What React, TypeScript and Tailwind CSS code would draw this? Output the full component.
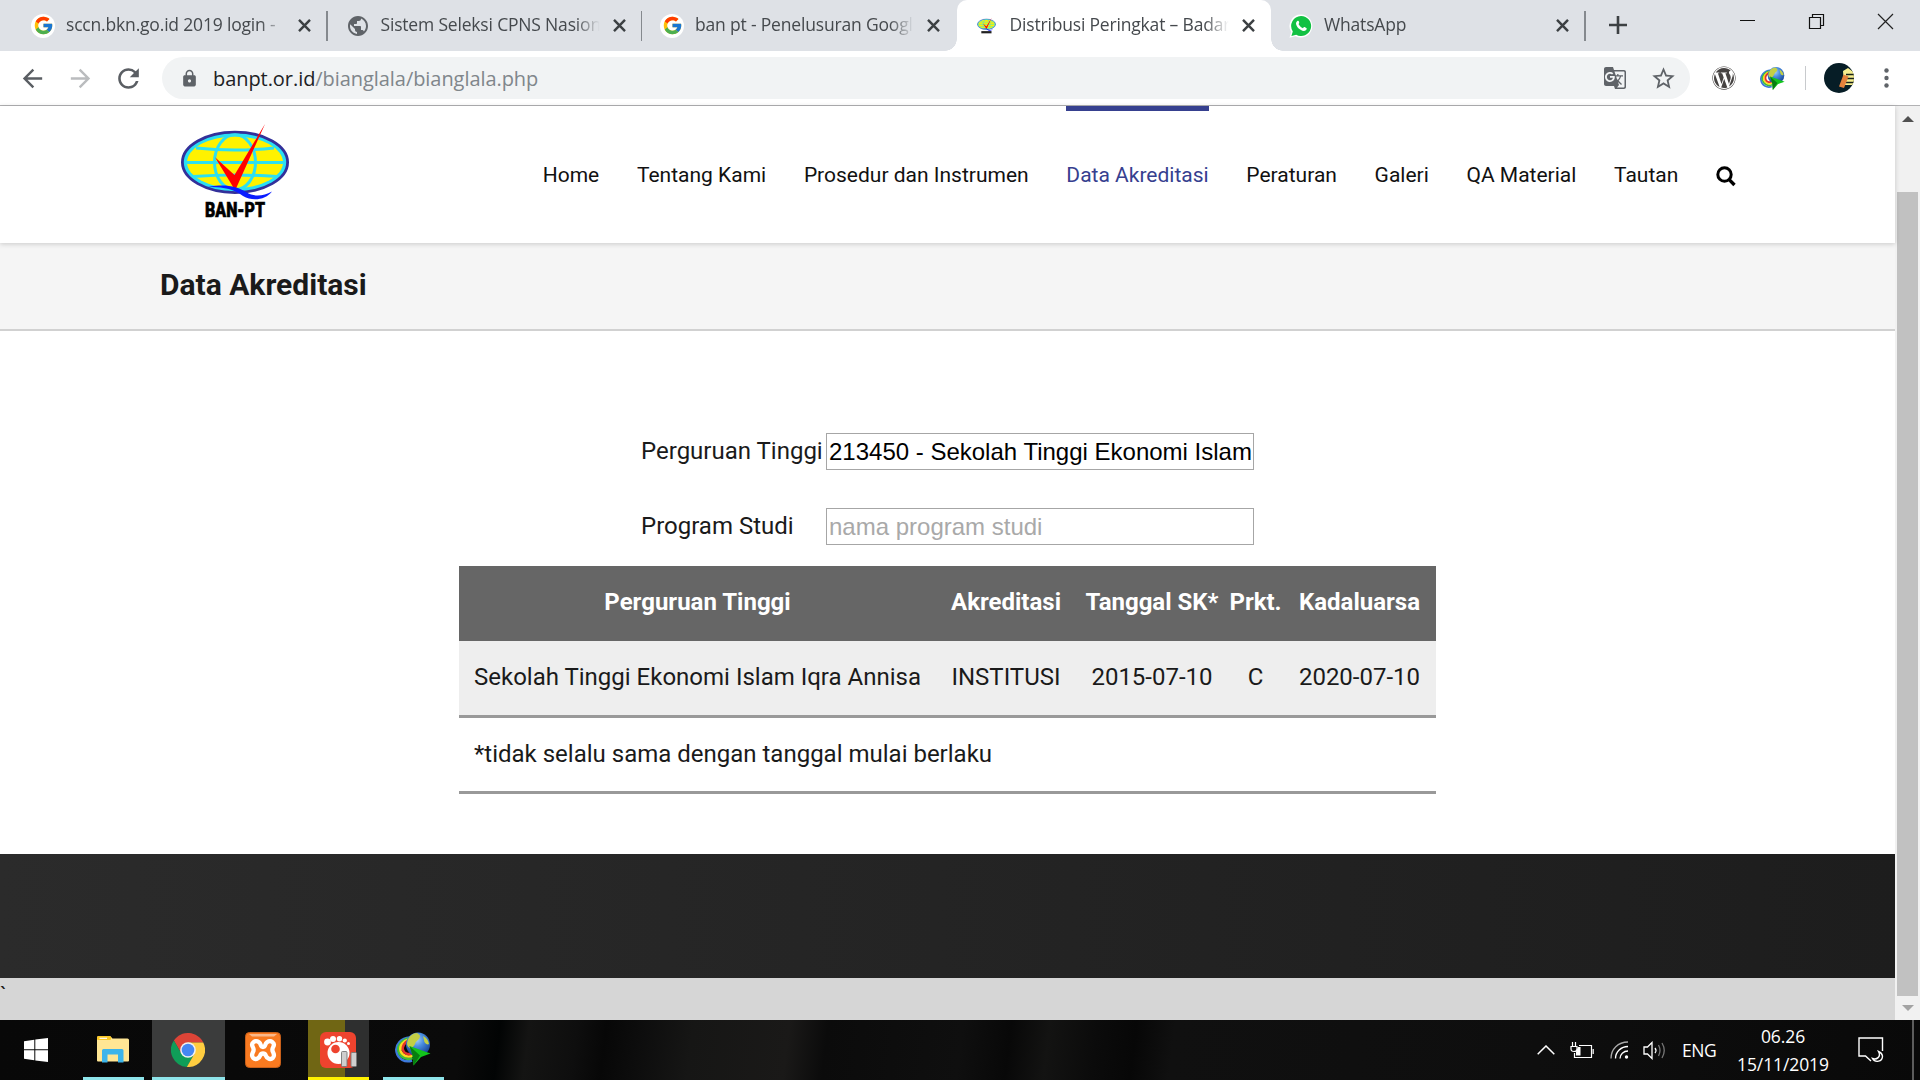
import type { ReactNode } from 'react';
import { FcGoogle } from 'react-icons/fc';
import { FaWordpress } from 'react-icons/fa';
import {
  MdArrowBack,
  MdArrowForward,
  MdGTranslate,
  MdLock,
  MdPublic,
  MdRefresh,
  MdStarBorder,
} from 'react-icons/md';

function CloseX() {
  return (
    <svg width="13" height="13" viewBox="0 0 13 13" className="shrink-0">
      <path d="M1 0.800 12 12.200M12 0.800 1 12.200" stroke="#3c4043" strokeWidth="2.4" />
    </svg>
  );
}

function GlobeMark() {
  return (
    <>
      <ellipse cx="55" cy="40.3" rx="52.6" ry="30.2" fill="#29dff5" stroke="#33309a" strokeWidth="2.8" />
      <ellipse cx="55" cy="40.3" rx="48" ry="25.8" fill="#fff200" />
      <g fill="none" stroke="#2ee0f0" strokeWidth="3">
        <ellipse cx="55" cy="40.3" rx="20.5" ry="27.5" />
        <path d="M5 40.5H105M16 26Q35 28 55 28T94 26M13 54.5Q35 53 55 53T97 54.5" />
      </g>
      <path d="M35 35.3 54.5 53 85 2 56 66.5 54 66.5Z" fill="#ff0000" />
      <path d="M28 65C45 62 56 64 66 70C75 75.500 83 74 92 69.500C86 77.500 73 80 63 74C54 67 42 64.500 28 65Z" fill="#0a1cff" />
    </>
  );
}

function BanPtLogo() {
  return (
    <svg width="110" height="98" viewBox="0 0 110 98">
      <GlobeMark />
      <text
        x="25"
        y="94.5"
        textLength="60"
        lengthAdjust="spacingAndGlyphs"
        fontFamily="Roboto, sans-serif"
        fontWeight="900"
        fontSize="19.5"
        fill="#000"
        stroke="#000"
        strokeWidth="0.6"
      >
        BAN-PT
      </text>
    </svg>
  );
}

function BanPtFavicon() {
  return (
    <svg width="19" height="18" viewBox="0 0 110 100">
      <GlobeMark />
      <path d="M25 86H84" stroke="#222" strokeWidth="13" />
    </svg>
  );
}

function WhatsAppIcon() {
  return (
    <svg width="24" height="24" viewBox="0 0 24 24">
      <path d="M12 0.500A11.500 11.500 0 1 1 6.500 22.200L0.500 23.800 2.200 18A11.500 11.500 0 0 1 12 0.500Z" fill="#fff" />
      <path d="M12 2A10 10 0 1 1 7.200 20.700L2.400 21.900 3.800 17.400A10 10 0 0 1 12 2Z" fill="#12c143" />
      <path
        d="M8.700 6.800C9.400 6.400 9.700 7 10 7.800C10.400 8.900 10.300 9.100 9.500 10C10.500 12 11.900 13.300 14 14.200C15 13 15.200 12.900 16 13.300L17.700 14.200C17.800 16 16.300 17 14.800 17C11 16.500 7.600 13.200 7 9.800C7 8.500 7.700 7.300 8.700 6.800Z"
        fill="#fff"
      />
    </svg>
  );
}

function IdmIcon({ size }: { size: number }) {
  return (
    <svg width={size} height={size} viewBox="0 0 36 34">
      <defs>
        <radialGradient id="idmGlobe" cx="0.45" cy="0.3" r="0.7">
          <stop offset="0" stopColor="#a9d0f7" />
          <stop offset="0.4" stopColor="#4a8ee0" />
          <stop offset="1" stopColor="#143f94" />
        </radialGradient>
      </defs>
      <g fill="none" strokeWidth="2.600">
        <path d="M15 5.500C6 6 0 13 1.600 20C3 27 10 31 17 28.500" stroke="#3d79dd" />
        <path d="M14 6.500C7 7.500 2.500 13.500 3.500 19C5 25 11 28.500 17.500 26" stroke="#3fbe3a" />
        <path d="M14 7.500C8 9 4.500 14 5.500 18.500C7 23.500 12 26 18 23.500" stroke="#ffd91f" />
        <path d="M14 8.500C9.500 10 7 14.500 8 18C9 21.500 13 23.500 18 21" stroke="#e5322d" />
      </g>
      <circle cx="23" cy="12.500" r="12" fill="url(#idmGlobe)" />
      <path d="M12.500 9C14 4 18 1 22 1C24 2.500 26 3 24.500 6C23.500 8.500 21 8.500 20 12C19 15 16 16.500 14 15.500C12 14 11.500 12 12.500 9ZM28 4C31 5.500 33.500 8 34 12C32 13.500 29 11 29 8Z" fill="#c3cf45" />
      <path d="M14.500 14 35.500 21.500 26 25 18.500 33.500 17.500 23Z" fill="#12c51c" />
      <path d="M14.500 14 25 23.500 18.500 33.500 17.500 23Z" fill="#087d10" />
    </svg>
  );
}

type TabProps = { icon: ReactNode; title: string; active?: boolean; separator?: boolean };

function Tab({ icon, title, active, separator }: TabProps) {
  return (
    <div
      className={
        'relative flex h-full w-[314.5px] shrink-0 items-center pl-[18px] ' +
        (active ? 'rounded-t-[10px] bg-white' : '')
      }
    >
      {active && (
        <>
          <span className="absolute bottom-0 -left-3 size-3 bg-[radial-gradient(circle_at_0_0,transparent_11.5px,white_12px)]" />
          <span className="absolute -right-3 bottom-0 size-3 bg-[radial-gradient(circle_at_100%_0,transparent_11.5px,white_12px)]" />
        </>
      )}
      <span className="flex w-6 shrink-0 items-center justify-center">{icon}</span>
      <span className="ml-[11px] w-[221px] pb-[2px] text-[17.5px] tracking-[-0.18px] whitespace-nowrap text-[#45494d] [mask-image:linear-gradient(to_right,black_88%,transparent_99%)]">
        {title}
      </span>
      <span className="ml-[11px] flex">
        <CloseX />
      </span>
      {separator && <span className="absolute top-[11px] right-0 h-[30px] w-[1.5px] bg-[#85898e]" />}
    </div>
  );
}

function GoogleFavicon() {
  return (
    <span className="flex size-6 items-center justify-center rounded-full bg-white">
      <FcGoogle size={21} />
    </span>
  );
}

function TabStrip() {
  return (
    <div className="flex h-[51px] shrink-0 bg-[#dee1e6] pl-[13px]">
      <Tab icon={<GoogleFavicon />} title="sccn.bkn.go.id 2019 login -" separator />
      <Tab icon={<MdPublic size={26} color="#5f6368" />} title="Sistem Seleksi CPNS Nasion" separator />
      <Tab icon={<GoogleFavicon />} title="ban pt - Penelusuran Googl" />
      <Tab icon={<BanPtFavicon />} title="Distribusi Peringkat – Badar" active />
      <Tab icon={<WhatsAppIcon />} title="WhatsApp" separator />
      <svg width="18" height="18" viewBox="0 0 18 18" className="mt-4 ml-[23px]">
        <path d="M9 0V18M0 9H18" stroke="#3c4043" strokeWidth="2.6" />
      </svg>
      <div className="mt-[13px] mr-[26px] ml-auto flex gap-[52px]">
        <svg width="17" height="17" viewBox="0 0 17 17">
          <path d="M1 7.500H16" stroke="#111" />
        </svg>
        <svg width="17" height="17" viewBox="0 0 17 17" fill="none" stroke="#111" strokeWidth="1.2">
          <path d="M1.500 4.500H12.500V15.500H1.500ZM4.500 4.500V1.500H15.500V12.500H12.500" />
        </svg>
        <svg width="17" height="17" viewBox="0 0 17 17">
          <path d="M1 1 16 16M16 1 1 16" stroke="#222" strokeWidth="1.2" />
        </svg>
      </div>
    </div>
  );
}

function Slot({ children }: { children: ReactNode }) {
  return <span className="flex w-12 shrink-0 items-center justify-center">{children}</span>;
}

function Toolbar() {
  return (
    <div className="flex h-[55px] shrink-0 items-center border-b border-[#b2b2b4] bg-white pl-2">
      <Slot><MdArrowBack size={29} color="#5a5e63" /></Slot>
      <Slot><MdArrowForward size={29} color="#babcbe" /></Slot>
      <Slot><MdRefresh size={31} color="#5a5e63" /></Slot>
      <div className="ml-[10px] flex h-[42px] w-[1528px] shrink-0 items-center rounded-full bg-[#f1f3f4] pr-[3px] pl-[15px]">
        <span className="flex w-6 justify-center"><MdLock size={19} color="#5f6368" /></span>
        <span className="ml-3 pt-px text-[20px] tracking-[-0.06px] text-[#80868b]">
          <span className="text-[#202124]">banpt.or.id</span>/bianglala/bianglala.php
        </span>
        <span className="ml-auto flex">
          <Slot><MdGTranslate size={24} color="#5f6368" /></Slot>
          <Slot><MdStarBorder size={27} color="#5f6368" /></Slot>
        </span>
      </div>
      <span className="ml-[10px] flex">
        <Slot><FaWordpress size={24} color="#464342" /></Slot>
        <Slot><IdmIcon size={25} /></Slot>
      </span>
      <span className="ml-[9px] h-6 w-px bg-[#c8cacd]" />
      <svg width="30" height="30" viewBox="0 0 30 30" className="ml-[18px] shrink-0">
        <clipPath id="avatarClip"><circle cx="15" cy="15" r="15" /></clipPath>
        <g clipPath="url(#avatarClip)">
          <rect width="30" height="30" fill="#061d26" />
          <path d="M19 8 24 5 28 8 30 9V22L20 22Z" fill="#f6ee8e" />
          <path d="M22 11.500H30M22 15.500H30M22 19.500H30" stroke="#16201c" strokeWidth="1.500" />
          <path d="M19.500 11.500 24.500 13.500 20 25 15 23.500Z" fill="#e5823c" />
        </g>
      </svg>
      <span className="ml-2 flex">
        <Slot>
          <svg width="5" height="20" viewBox="0 0 5 20" fill="#5f6368">
            <circle cx="2.500" cy="2.500" r="2.200" />
            <circle cx="2.500" cy="10" r="2.200" />
            <circle cx="2.500" cy="17.500" r="2.200" />
          </svg>
        </Slot>
      </span>
    </div>
  );
}

const navItems = [
  'Home',
  'Tentang Kami',
  'Prosedur dan Instrumen',
  'Data Akreditasi',
  'Peraturan',
  'Galeri',
  'QA Material',
  'Tautan',
];

function SiteHeader() {
  return (
    <header className="relative flex h-[137px] shrink-0 bg-white pr-[159px] pl-[180px] shadow-[0_1px_5px_rgba(0,0,0,0.18)]">
      <div className="pt-4">
        <BanPtLogo />
      </div>
      <nav className="ml-auto flex items-stretch gap-[37.7px] text-[21px] whitespace-nowrap text-[#111]">
        {navItems.map((label) => {
          const active = label === 'Data Akreditasi';
          return (
            <a
              key={label}
              className={
                'flex items-center border-t-[5px] pb-[3px] ' +
                (active ? 'border-t-[#36408f] text-[#36408f]' : 'border-transparent')
              }
            >
              {label}
            </a>
          );
        })}
        <svg width="20" height="21" viewBox="0 0 20 21" className="mt-[4px] self-center" fill="none" stroke="#000">
          <circle cx="8.500" cy="8.500" r="6.700" strokeWidth="3" />
          <path d="M13.200 13.600 18.500 19" strokeWidth="3.400" />
        </svg>
      </nav>
    </header>
  );
}

const columns = 'grid grid-cols-[477px_140px_152px_55px_153px]';

function SitePage() {
  return (
    <div className="flex w-[1895px] flex-col bg-white font-[Roboto,sans-serif] text-[24px] text-[#1a1a1a]">
      <SiteHeader />
      <div className="flex h-[88px] shrink-0 items-center border-b-2 border-[#d1d1d1] bg-[#f5f5f5] pb-[3px] pl-[160px]">
        <h1 className="text-[30px] font-bold">Data Akreditasi</h1>
      </div>
      <main className="h-[523px] shrink-0 pt-[102px]">
        <div className="ml-[641px] grid grid-cols-[185px_428px] grid-rows-[37px_37px] gap-y-[38px]">
          <label className="flex items-center pb-px leading-8 whitespace-nowrap">Perguruan Tinggi</label>
          <div className="flex h-[37px] items-center overflow-hidden border border-[#a6a6a6] pl-[2px] font-['Liberation_Sans',sans-serif] leading-8 whitespace-nowrap text-black">
            213450 - Sekolah Tinggi Ekonomi Islam
          </div>
          <label className="flex items-center pb-px leading-8 whitespace-nowrap">Program Studi</label>
          <div className="flex h-[37px] items-center border border-[#a6a6a6] pl-[2px] font-['Liberation_Sans',sans-serif] leading-8 text-[#a9a9a9]">
            nama program studi
          </div>
        </div>
        <section className="mt-[21px] ml-[459px] w-[977px] whitespace-nowrap">
          <div className={columns + ' h-[75px] items-center bg-[#666] pb-[3px] text-center font-bold text-white'}>
            <span>Perguruan Tinggi</span>
            <span>Akreditasi</span>
            <span>Tanggal SK*</span>
            <span className="-mx-2">Prkt.</span>
            <span>Kadaluarsa</span>
          </div>
          <div className={columns + ' h-[77px] items-center border-b-[3px] border-[#999] bg-[#eee] pb-[2px] text-center'}>
            <span>Sekolah Tinggi Ekonomi Islam Iqra Annisa</span>
            <span>INSTITUSI</span>
            <span>2015-07-10</span>
            <span>C</span>
            <span>2020-07-10</span>
          </div>
          <div className="flex h-[76px] items-center border-b-[3px] border-[#999] pb-px pl-[15px]">
            *tidak selalu sama dengan tanggal mulai berlaku
          </div>
        </section>
      </main>
      <footer className="h-[124px] shrink-0 bg-linear-to-r from-[#2b2b2b] to-[#1d1d1d]" />
      <div className="h-[42px] shrink-0 bg-[#d6d6d6] pt-[4px] text-[22px] leading-7">`</div>
    </div>
  );
}

function Scrollbar() {
  return (
    <div className="flex w-[25px] flex-col items-center bg-[#f1f1f1] pt-[10px] pb-[9px]">
      <svg width="12" height="6" viewBox="0 0 12 6"><path d="M0 6 6 0 12 6Z" fill="#505050" /></svg>
      <div className="mt-[70px] h-[804px] w-[21px] bg-[#c1c1c1]" />
      <svg width="12" height="6" viewBox="0 0 12 6" className="mt-auto"><path d="M0 0 6 6 12 0Z" fill="#a3a3a3" /></svg>
    </div>
  );
}

function WindowsIcon() {
  return (
    <svg width="24" height="24" viewBox="0 0 24 24" fill="#fff">
      <path d="M0 3.300 10.300 1.800V11.200H0ZM11.300 1.600 24 0V11.200H11.300ZM0 12.200H10.300V22.300L0 20.800ZM11.300 12.200H24V24L11.300 22.400Z" />
    </svg>
  );
}

function ExplorerIcon() {
  return (
    <svg width="32" height="27" viewBox="0 0 32 27">
      <path d="M0 1.500Q0 0 1.500 0H13L15.500 2.500H30.500Q32 2.500 32 4V24.500Q32 25.500 31 25.500H1Q0 25.500 0 24.500Z" fill="#ffe694" />
      <path d="M0 1.500Q0 0 1.500 0H12.500Q14 0 14.500 1.800L13.500 4H1Q0 4 0 3Z" fill="#fbc926" />
      <path d="M2.500 2.300H10" stroke="#fff" strokeWidth="1.200" />
      <path d="M5 14.500Q5 13 6.500 13H25Q26.500 13 26.500 14.500V26.500H21V18.500H10.500V26.500H5Z" fill="#3cb4ea" />
    </svg>
  );
}

function ChromeIcon() {
  return (
    <svg width="34" height="34" viewBox="0 0 100 100">
      <path d="M94.900 28A50 50 0 0 0 8.500 22.100L30.900 61 50 50V28Z" fill="#dc4437" />
      <path d="M8.500 22.100A50 50 0 0 0 46.600 99.900L69 61 50 50 30.900 61Z" fill="#109d58" />
      <path d="M46.600 99.900A50 50 0 0 0 94.900 28H50V50L69 61Z" fill="#ffcd40" />
      <circle cx="50" cy="50" r="23" fill="#f1f1f1" />
      <circle cx="50" cy="50" r="18.500" fill="#4587f3" />
    </svg>
  );
}

function XamppIcon() {
  return (
    <svg width="36" height="36" viewBox="0 0 36 36">
      <rect x="0.500" y="0.500" width="35" height="35" rx="4" fill="#f97a20" stroke="#c9601a" />
      <path d="M4 2H32L29 4.500H7Z" fill="#fbb98a" />
      <path
        d="M14 10.200C10 7.500 5.500 11 7.800 15C9 17 9 18.500 7.800 20.500C5.500 25 9.500 28.500 13 26.200C16 24.500 14.500 21.500 18 21.500C21.500 21.500 20 24.500 23 26.200C26.500 28.500 30.500 25 28.200 20.500C27 18.500 27 17 28.200 15C30.500 11 26 7.500 22 10.200C19.500 12 21 15 18 15C15 15 16.500 12 14 10.200Z"
        fill="none"
        stroke="#fff"
        strokeWidth="4.300"
      />
    </svg>
  );
}

function GomIcon() {
  return (
    <svg width="38" height="36" viewBox="0 0 38 36">
      <rect width="36" height="36" rx="6" fill="#ee432e" />
      <g fill="#fff">
        <circle cx="18.500" cy="21" r="11" />
        <circle cx="7.500" cy="10" r="3.400" />
        <circle cx="13" cy="7" r="3" />
        <circle cx="19.500" cy="6.700" r="2.700" />
        <circle cx="24.800" cy="8.500" r="2.100" />
        <circle cx="28.500" cy="11.500" r="1.500" />
      </g>
      <circle cx="15.500" cy="17" r="4.300" fill="#ee432e" />
      <g fill="#cfcfcf" stroke="#777" strokeWidth="0.900">
        <rect x="21.500" y="19.500" width="5.500" height="15" rx="1" />
        <rect x="31" y="20.500" width="5.500" height="14" rx="1" />
      </g>
    </svg>
  );
}

function Tray() {
  return (
    <div className="ml-auto flex items-center text-white">
      <svg width="18" height="10" viewBox="0 0 18 10" fill="none" stroke="#fff" strokeWidth="1.500">
        <path d="M0.700 9.300 9 1 17.300 9.300" />
      </svg>
      <svg width="24" height="18" viewBox="0 0 24 18" className="ml-[15px]" fill="none" stroke="#fff" strokeWidth="1.200">
        <path d="M9 4.500H21.500V16.500H4.500V12M23.200 8V13" />
        <path d="M1 5.500H7V8Q7 10.500 4 10.500Q1 10.500 1 8ZM2.500 1V5M5.500 1V5" />
        <path d="M6 10.500 8 6H10.500V14.500H6Z" fill="#fff" stroke="none" />
      </svg>
      <svg width="19" height="18" viewBox="0 0 19 18" className="ml-4" fill="none" stroke="#fff" strokeWidth="1.300">
        <path d="M1 17.500C1 8 8 1 18 1" stroke="#aaa" />
        <path d="M5.500 17.500C5.500 11 11 5.500 18 5.500M10 17.500C10 13.500 13.500 10 18 10" />
        <circle cx="16.500" cy="16" r="1.700" fill="#fff" stroke="none" />
      </svg>
      <svg width="23" height="19" viewBox="0 0 23 19" className="ml-[14px]" fill="none" stroke="#fff" strokeWidth="1.300">
        <path d="M1 6H4.500L9 1.500V17.500L4.500 13H1Z" />
        <path d="M12 7Q14 9.500 12 12" />
        <path d="M15.500 4Q18.500 9.500 15.500 15M19 2Q23.500 9.500 19 17" stroke="#777" />
      </svg>
      <span className="ml-[16px] w-[35px] text-[17.500px] tracking-[-0.500px]">ENG</span>
      <div className="ml-[19px] flex w-[94px] flex-col text-center text-[17.500px] leading-7 tracking-[-0.100px]">
        <span>06.26</span>
        <span>15/11/2019</span>
      </div>
      <svg width="26" height="26" viewBox="0 0 26 26" className="ml-[28px]" fill="none" stroke="#fff" strokeWidth="1.400">
        <path d="M13 24 7.500 19H1V1H24.500V14" />
        <path d="M20.500 14.500C23.500 20 18.500 23 14.500 21.500C17 26 24.500 25 24.500 19Q24 16 20.500 14.500Z" />
      </svg>
      <span className="ml-[28px] h-[60px] w-[2px] bg-[#5c5c5c]" />
      <span className="w-[6px]" />
    </div>
  );
}

function Taskbar() {
  return (
    <div className="flex h-[60px] shrink-0 bg-[#0a0b0b] bg-[linear-gradient(97deg,#080808_0,#0a0a0a_24%,#020404_26%,#141413_27.500%,#0e0e0e_30%,#070707_31.500%,#0c0c0c_33%,#161615_36%,#1a1918_41%,#0b0b0b_43%,#0f0f0f_50%,#080808_52.500%,#131312_54.500%,#0b0b0b_57%,#070707_59%,#101010_61%,#0e0e0e_80%,#090909_100%)]">
      <div className="flex w-[72px] items-center justify-center"><WindowsIcon /></div>
      <div className="ml-[11px] flex w-[61px] items-center justify-center border-b-[3px] border-[#8ee4ea] pt-[2px] pr-px"><ExplorerIcon /></div>
      <div className="ml-2 flex w-[73px] items-center justify-center border-b-[3px] border-[#8ee4ea] bg-[#3b3c3c] pt-[2px] pr-[2px]"><ChromeIcon /></div>
      <div className="ml-[20px] flex w-9 items-center justify-center"><XamppIcon /></div>
      <div className="ml-[27px] flex w-[61px] items-center justify-center border-b-[3px] border-[#fff200] bg-[linear-gradient(to_right,#706614_37px,#2e2f2f_37px)] pt-[3px]">
        <GomIcon />
      </div>
      <div className="ml-[14px] flex w-[61px] items-center justify-center border-b-[3px] border-[#8ee4ea] pt-px pr-[2px]"><IdmIcon size={36} /></div>
      <Tray />
    </div>
  );
}

export default function App() {
  return (
    <div className="flex h-[1080px] w-[1920px] flex-col overflow-hidden font-['Open_Sans',sans-serif]">
      <TabStrip />
      <Toolbar />
      <div className="flex h-[914px] shrink-0">
        <SitePage />
        <Scrollbar />
      </div>
      <Taskbar />
    </div>
  );
}
